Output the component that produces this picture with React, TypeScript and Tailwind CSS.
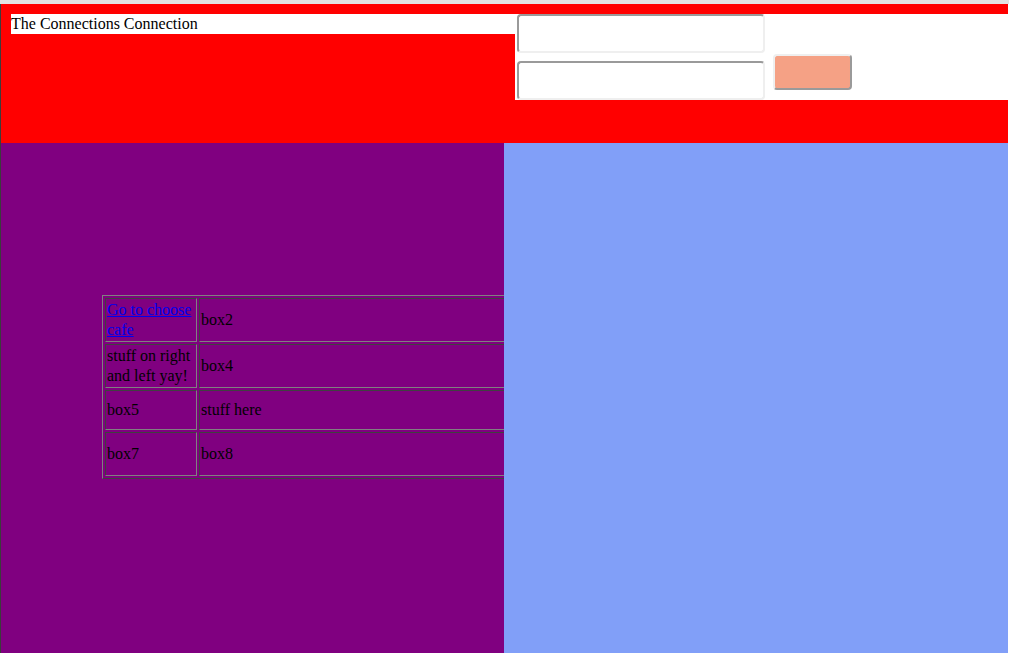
export default function App() {
  const serif = { fontFamily: '"Liberation Serif", "Times New Roman", serif' }
  const cell = "border border-t-[#404040] border-l-[#404040] border-b-[#808080] border-r-[#808080] p-[1px] align-middle"

  return (
    <div className="w-[1009px] h-[653px] bg-white flex flex-col text-black text-[16px] leading-[20px]" style={serif}>
      {/* top strip */}
      <div className="h-[4px] bg-[#e3e3e3]" />

      <div className="flex flex-1 min-h-0">
        <div className="w-[1px] bg-[#3c3c3c]" />

        <div className="flex-1 flex flex-col min-w-0">
          {/* Header */}
          <header className="h-[139px] bg-[#ff0000] pt-[10px] pl-[10px] flex items-start">
            <div className="w-[504px] h-[20px] bg-white">The Connections Connection</div>
            <div className="flex-1 h-[86px] bg-white pl-[2px] flex gap-[8px]">
              <div className="flex flex-col gap-[8px]">
                <input className="w-[248px] h-[39px] bg-white rounded-[4px] border-2 border-t-[#9a9a9a] border-l-[#9a9a9a] border-b-[#efefef] border-r-[#efefef] outline-none" />
                <input className="w-[248px] h-[39px] bg-white rounded-[4px] border-2 border-t-[#9a9a9a] border-l-[#9a9a9a] border-b-[#efefef] border-r-[#efefef] outline-none" />
              </div>
              <button className="self-end mb-[10px] w-[79px] h-[36px] bg-[#f5a185] rounded-[4px] border-2 border-t-[#efefef] border-l-[#efefef] border-b-[#9a9a9a] border-r-[#9a9a9a]" />
            </div>
          </header>

          {/* Main */}
          <main className="flex flex-1 min-h-0">
            <section className="w-[503px] bg-[#800080] overflow-hidden pt-[152px] pl-[101px]">
              <table className="border-separate border-spacing-[2px] w-[520px] border border-t-[#808080] border-l-[#808080] border-b-[#404040] border-r-[#404040]">
                <tbody>
                  <tr className="h-[44px]">
                    <td className={`${cell} w-[92px]`}>
                      <a href="#" className="text-[#0000ee] underline">Go to choose cafe</a>
                    </td>
                    <td className={cell}>box2</td>
                  </tr>
                  <tr className="h-[44px]">
                    <td className={cell}>stuff on right and left yay!</td>
                    <td className={cell}>box4</td>
                  </tr>
                  <tr className="h-[40px]">
                    <td className={cell}>box5</td>
                    <td className={cell}>stuff here</td>
                  </tr>
                  <tr className="h-[44px]">
                    <td className={cell}>box7</td>
                    <td className={cell}>box8</td>
                  </tr>
                </tbody>
              </table>
            </section>
            <section className="flex-1 bg-[#819ff8]" />
          </main>
        </div>

        <div className="w-[1px] bg-white" />
      </div>
    </div>
  )
}
